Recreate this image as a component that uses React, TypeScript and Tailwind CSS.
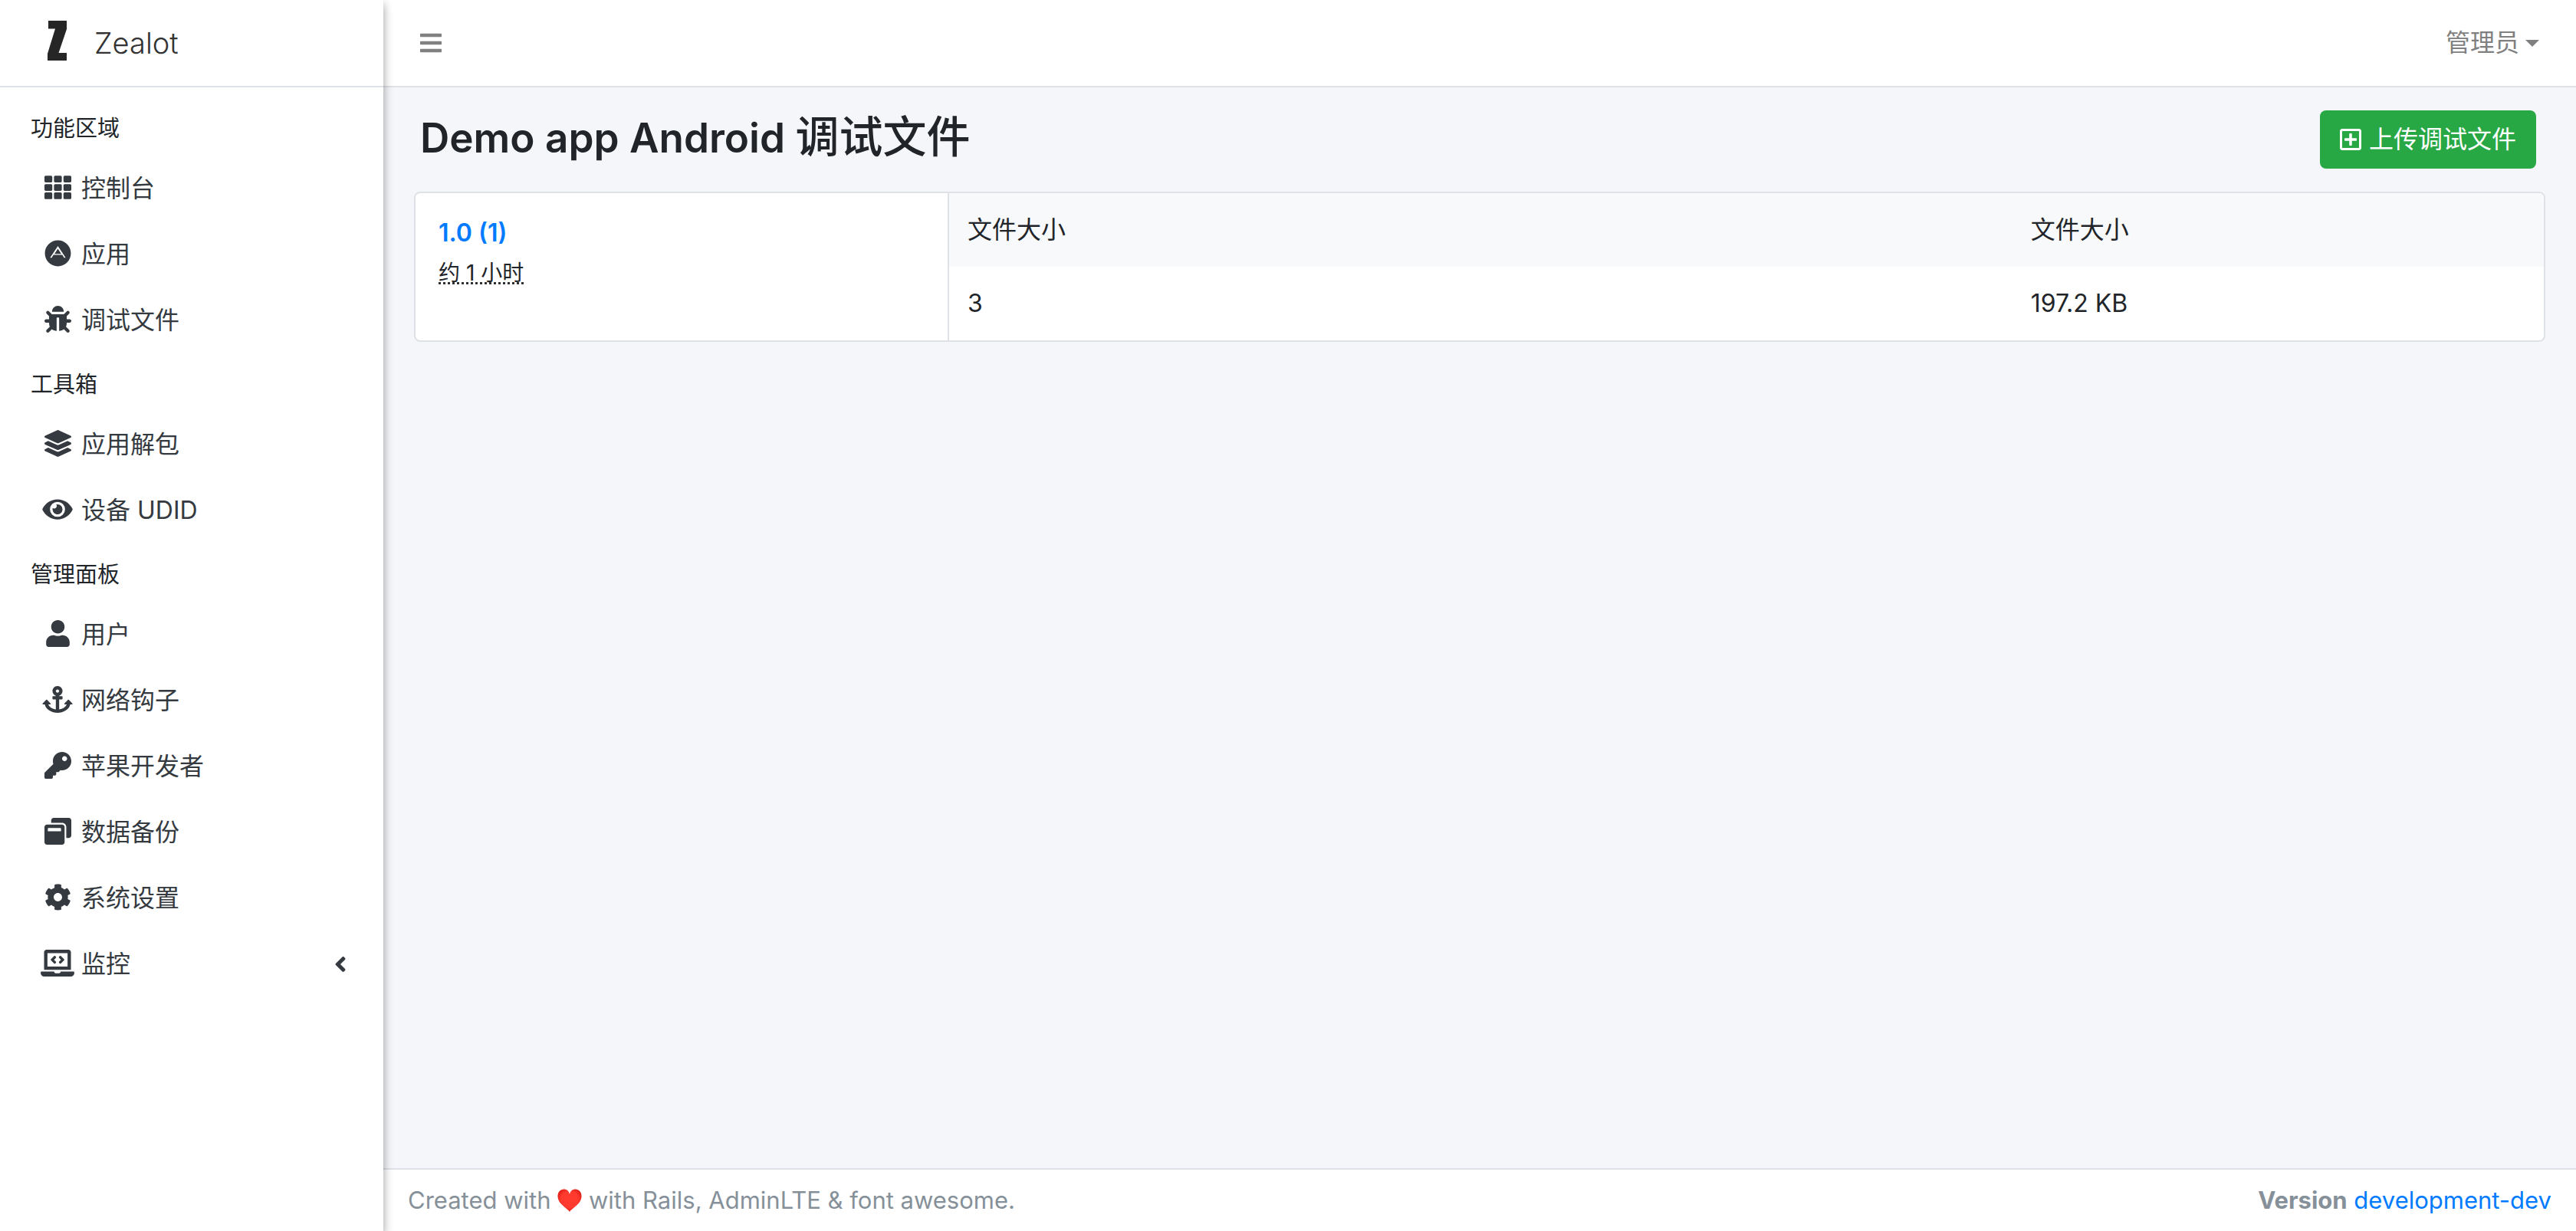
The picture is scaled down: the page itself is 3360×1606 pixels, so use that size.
import React from "react";
import {
  FaAdn,
  FaAnchor,
  FaAngleLeft,
  FaBars,
  FaBug,
  FaCog,
  FaEye,
  FaKey,
  FaLaptopCode,
  FaLayerGroup,
  FaRegPlusSquare,
  FaTh,
  FaUser,
  FaWindowRestore,
} from "react-icons/fa";
import type { IconType } from "react-icons";

type Item = { label: string; icon: IconType; size: string; tree?: boolean };
type Section = { title: string; items: Item[] };

const square = "h-[35px] w-[35px]";
const wide = "h-[35px] w-[40px]";
const extraWide = "h-[35px] w-[44px]";

const sections: Section[] = [
  {
    title: "功能区域",
    items: [
      { label: "控制台", icon: FaTh, size: square },
      { label: "应用", icon: FaAdn, size: square },
      { label: "调试文件", icon: FaBug, size: square },
    ],
  },
  {
    title: "工具箱",
    items: [
      { label: "应用解包", icon: FaLayerGroup, size: square },
      { label: "设备 UDID", icon: FaEye, size: wide },
    ],
  },
  {
    title: "管理面板",
    items: [
      { label: "用户", icon: FaUser, size: square },
      { label: "网络钩子", icon: FaAnchor, size: wide },
      { label: "苹果开发者", icon: FaKey, size: square },
      { label: "数据备份", icon: FaWindowRestore, size: square },
      { label: "系统设置", icon: FaCog, size: square },
      { label: "监控", icon: FaLaptopCode, size: extraWide, tree: true },
    ],
  },
];

function Logo() {
  return (
    <svg viewBox="0 0 25 52" className="mb-1.5 h-[52px] w-[25px]" aria-hidden="true">
      <path d="M1 0H25V11L14.500 42H25V52H0V43L10 10.500H1Z" fill="#262626" />
    </svg>
  );
}

function Heart() {
  return (
    <svg viewBox="0 0 32 30" className="inline-block h-[30px] w-8 align-[-4px]" role="img" aria-label="love">
      <defs>
        <radialGradient id="heart" cx="0.5" cy="0.45" r="0.6">
          <stop offset="0.6" stopColor="#ff3b2f" />
          <stop offset="1" stopColor="#d8150f" />
        </radialGradient>
      </defs>
      <path
        d="M16 30C13 25 0.500 20 0.500 9.500C0.500 4 4 0.500 8.500 0.500C12 0.500 15 2.500 16 7C17 2.500 20 0.500 23.500 0.500C28 0.500 31.500 4 31.500 9.500C31.500 20 19 25 16 30Z"
        fill="url(#heart)"
      />
    </svg>
  );
}

function Sidebar() {
  return (
    <aside className="relative z-10 w-[500px] shrink-0 bg-white shadow-[0_8px_12px_rgba(0,0,0,0.2),0_4px_12px_rgba(0,0,0,0.22)]">
      <a href="#" className="flex h-[114px] items-center border-b-2 border-[#dee2e6] pl-[62px] text-[#333]">
        <Logo />
        <span className="ml-9 text-[38px] font-light">Zealot</span>
      </a>
      <nav className="px-4 pt-4">
        {sections.map((section) => (
          <section key={section.title}>
            <h2 className="flex h-[76px] items-center px-6 text-[29px] text-[#212529]">{section.title}</h2>
            <ul>
              {section.items.map(({ label, icon: Icon, size, tree }) => (
                <li key={label} className="mb-[6px]">
                  <a href="#" className="flex h-20 items-center px-8 text-[#343a40]">
                    <span className="mr-1 mb-1 flex w-[54px] justify-center">
                      <Icon className={`shrink-0 ${size}`} />
                    </span>
                    <span className="flex-1">{label}</span>
                    {tree && <FaAngleLeft className="h-8 w-4" />}
                  </a>
                </li>
              ))}
            </ul>
          </section>
        ))}
      </nav>
    </aside>
  );
}

export default function App() {
  return (
    <div
      lang="zh-CN"
      className="flex min-h-screen bg-[#f4f6f9] font-['Inter','Noto_Sans_CJK_SC',sans-serif] text-[32px] leading-[48px] text-[#212529]"
    >
      <Sidebar />
      <div className="flex min-w-0 flex-1 flex-col">
        <header className="flex h-[114px] items-center justify-between border-b-2 border-[#dee2e6] bg-white px-12 text-[#808080]">
          <button type="button" aria-label="菜单">
            <FaBars className="h-8 w-7" />
          </button>
          <button type="button" className="flex items-center gap-2">
            管理员
            <span className="border-x-[9px] border-t-[9px] border-x-transparent border-t-[#808080]" />
          </button>
        </header>

        <main className="flex-1 px-10 pt-[30px]">
          <div className="flex items-start justify-between pr-3 pl-2">
            <h1 className="text-[53px] leading-[70px] font-semibold">
              Demo app Android <span className="text-[57px] font-medium">调试文件</span>
            </h1>
            <button
              type="button"
              className="flex h-[76px] items-center gap-2.5 rounded-lg bg-[#28a745] px-[26px] text-white"
            >
              <FaRegPlusSquare className="h-8 w-7" />
              上传调试文件
            </button>
          </div>

          <div className="mt-[30px] flex overflow-hidden rounded-lg border-2 border-[#dee2e6] bg-white">
            <div className="w-1/4 px-[30px] pt-7">
              <a href="#" className="block font-semibold text-[#007bff]">
                1.0 (1)
              </a>
              <p className="mt-1 text-[28px]">
                <abbr title="约 1 小时" className="underline decoration-dotted">
                  约 1 小时
                </abbr>
              </p>
            </div>
            <div className="flex-1 border-l-2 border-[#dee2e6]">
              <table className="w-full table-fixed text-left">
                <thead className="bg-[#f8f9fa]">
                  <tr>
                    <th scope="col" className="w-2/3 px-6 py-6 font-normal">文件大小</th>
                    <th scope="col" className="px-6 py-6 font-normal">文件大小</th>
                  </tr>
                </thead>
                <tbody>
                  <tr>
                    <td className="px-6 py-6">3</td>
                    <td className="px-6 py-6">197.2 KB</td>
                  </tr>
                </tbody>
              </table>
            </div>
          </div>
        </main>

        <footer className="flex h-[82px] items-center justify-between border-t-2 border-[#dee2e6] bg-white px-8 text-[31px] text-[#869099]">
          <p>
            Created with <Heart /> with Rails, AdminLTE &amp; font awesome.
          </p>
          <p>
            <b className="font-bold">Version</b>{" "}
            <a href="#" className="text-[#007bff]">
              development-dev
            </a>
          </p>
        </footer>
      </div>
    </div>
  );
}
